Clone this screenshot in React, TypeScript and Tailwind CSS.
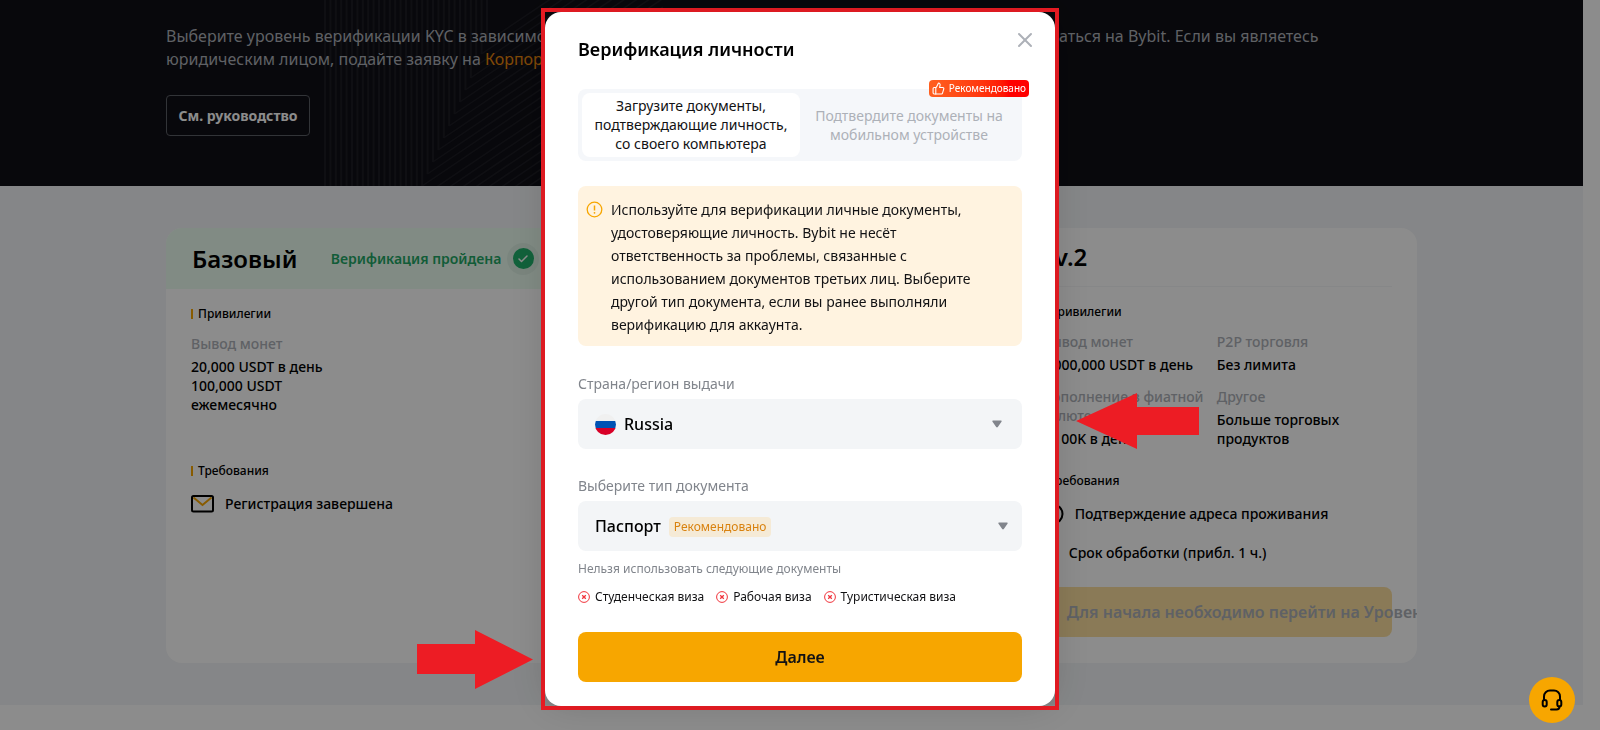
import { type ReactNode } from "react";
import { Check, ThumbsUp, X } from "lucide-react";

const FORBIDDEN_DOCS = ["Студенческая виза", "Рабочая виза", "Туристическая виза"];

function SectionLabel({ children }: { children: ReactNode }) {
  return (
    <h3 className="flex h-[18px] items-center gap-[5px] text-xs font-medium text-black">
      <span className="h-2.5 w-0.5 bg-[#f7a600]" />
      {children}
    </h3>
  );
}

function Privilege({ name, children }: { name: string; children: ReactNode }) {
  return (
    <div className="leading-[19px] font-medium">
      <dt className="text-[#adb1b8]">{name}</dt>
      <dd className="mt-1 text-black">{children}</dd>
    </div>
  );
}

function Requirement({ icon, children }: { icon: ReactNode; children: ReactNode }) {
  return (
    <li className="flex h-6 items-center gap-[11px] font-medium text-black">
      {icon}
      {children}
    </li>
  );
}

function EnvelopeIcon() {
  return (
    <svg width="23" height="18" viewBox="0 0 23 18" fill="none" aria-hidden="true">
      <path d="M2.5 2.5 11.5 10 20.5 2.5" stroke="#f7a600" strokeWidth="2" />
      <rect x="1" y="1" width="21" height="15.5" rx="1.5" stroke="#000" strokeWidth="2" />
    </svg>
  );
}

function CircleIcon({ size }: { size: number }) {
  return (
    <svg width={size} height={size} viewBox="0 0 22 22" fill="none" stroke="#000" strokeWidth="2" aria-hidden="true">
      <circle cx="11" cy="11" r="9.5" />
      <path d="M11 6v5.5l3.5 2" />
    </svg>
  );
}

function Caret() {
  return (
    <svg width="10" height="8" viewBox="0 0 10 8" fill="#81858c" aria-hidden="true">
      <path d="M1.2.5h7.6c.8 0 1.1.7.7 1.3L5.8 7c-.4.6-1.2.6-1.6 0L.5 1.8C.1 1.2.4.5 1.2.5Z" />
    </svg>
  );
}

function FlagIcon() {
  return (
    <svg width="21" height="21" viewBox="0 0 21 21" aria-hidden="true">
      <clipPath id="flag-round">
        <circle cx="10.5" cy="10.5" r="10.5" />
      </clipPath>
      <g clipPath="url(#flag-round)">
        <rect width="21" height="21" fill="#f0f0f0" />
        <rect y="7" width="21" height="7.5" fill="#0052b4" />
        <rect y="14" width="21" height="7" fill="#d80027" />
      </g>
    </svg>
  );
}

function WarningIcon() {
  return (
    <svg width="17" height="17" viewBox="0 0 17 17" fill="none" aria-hidden="true">
      <circle cx="8.5" cy="8.5" r="7.3" stroke="#f7a600" strokeWidth="1.3" />
      <path d="M8.5 4.5v5" stroke="#f7a600" strokeWidth="1.5" />
      <circle cx="8.5" cy="11.8" r=".9" fill="#f7a600" />
    </svg>
  );
}

function ForbiddenIcon() {
  return (
    <svg width="12" height="12" viewBox="0 0 12 12" fill="none" stroke="#f0343c" aria-hidden="true">
      <circle cx="6" cy="6" r="5.4" />
      <path d="m4.2 4.2 3.6 3.6m0-3.6L4.2 7.8" strokeWidth="1.3" />
    </svg>
  );
}

function HeadsetIcon() {
  return (
    <svg width="24" height="24" viewBox="0 0 24 24" fill="none" stroke="#000" strokeWidth="2" strokeLinecap="round" aria-hidden="true">
      <path d="M4 12V8.5A6 6 0 0 1 10 2.5h4a6 6 0 0 1 6 6V12" />
      <rect x="2.7" y="12" width="4" height="6.5" rx="2" />
      <rect x="17.3" y="12" width="4" height="6.5" rx="2" />
      <path d="M19.5 18.5c0 2-1 3-3 3H11" />
    </svg>
  );
}

// Faint stripes behind the hero: vertical ones first, then a diagonal band
function HeroPattern() {
  const verticals = Array.from({ length: 31 }, (_, i) => ({ x: 1 + i * 5.4, end: i < 19 ? 186 : 186 - (i - 18) * 12 }));
  const diagonals = Array.from({ length: 31 }, (_, i) =>
    i < 13 ? { x: 98 + i * 5.4, y: 186 - i * 12 } : { x: 98 + (i - 12) * 13, y: 188 },
  );
  return (
    <svg className="absolute top-0 left-[324px]" width="480" height="186" fill="none" stroke="#1d1d24" aria-hidden="true">
      {verticals.map(({ x, end }) => (
        <path key={x} strokeWidth="2" d={`M${x} 0V${end}`} />
      ))}
      {diagonals.map(({ x, y }) => (
        <path key={`${x}-${y}`} strokeWidth="1.5" d={`M${x} ${y}l230 -155`} />
      ))}
    </svg>
  );
}

function Hero() {
  return (
    <header className="relative overflow-hidden bg-[#0f0f16] pt-[25px] pb-[50px]">
      <HeroPattern />
      <div className="relative mx-auto w-full max-w-[1251px]">
        <p className="text-base leading-[23px] text-[#adb1b8]">
          Выберите уровень верификации KYC в зависимости от того, какими продуктами и услугами вы хотели бы пользоваться на Bybit. Если вы являетесь
          <br />
          юридическим лицом, подайте заявку на{" "}
          <a href="#corporate" className="text-[#e8860c]">
            Корпоративную верификацию
          </a>
        </p>
        <button type="button" className="mt-6 h-[41px] w-36 rounded border border-[#5c5f66] text-sm font-bold text-white">
          См. руководство
        </button>
      </div>
    </header>
  );
}

function Levels() {
  return (
    <section className="bg-[#f3f5f7] py-[42px]">
      <div className="mx-auto grid w-full max-w-[1251px] grid-cols-3 gap-[25px] text-sm">
        <article className="overflow-hidden rounded-2xl bg-white">
          <div className="flex h-[61px] items-center bg-[#ebfdf0] pl-[26px]">
            <h2 className="text-2xl leading-[30px] font-semibold text-black">Базовый</h2>
            <p className="ml-auto pr-1.5 font-semibold text-[#1fa866]">Верификация пройдена</p>
            <span className="mr-[27px] flex size-8 items-center justify-center rounded-full bg-[#dff3e6]">
              <span className="flex size-[21px] items-center justify-center rounded-full bg-[#20b26c]">
                <Check size={12} strokeWidth={3} color="#fff" />
              </span>
            </span>
          </div>
          <div className="px-[25px] pt-4">
            <SectionLabel>Привилегии</SectionLabel>
            <dl className="mt-[11px] grid grid-cols-2">
              <Privilege name="Вывод монет">
                20,000 USDT в день
                <br />
                100,000 USDT ежемесячно
              </Privilege>
            </dl>
            <div className="mt-12">
              <SectionLabel>Требования</SectionLabel>
            </div>
            <ul className="mt-3">
              <Requirement icon={<EnvelopeIcon />}>Регистрация завершена</Requirement>
            </ul>
          </div>
        </article>

        <article className="rounded-2xl bg-white" />

        <article className="overflow-hidden rounded-2xl bg-white px-[25px] pb-[26px]">
          <div className="flex h-[59px] items-center border-b border-[#f5f6f7]">
            <h2 className="text-2xl leading-[30px] font-semibold text-black">Lv.2</h2>
          </div>
          <div className="pt-4">
            <SectionLabel>Привилегии</SectionLabel>
            <dl className="mt-[11px] grid grid-cols-2 gap-y-[13px]">
              <Privilege name="Вывод монет">1,000,000 USDT в день</Privilege>
              <Privilege name="P2P торговля">Без лимита</Privilege>
              <Privilege name="Пополнение в фиатной валюте">$ 100K в день</Privilege>
              <Privilege name="Другое">Больше торговых продуктов</Privilege>
            </dl>
            <div className="mt-6">
              <SectionLabel>Требования</SectionLabel>
            </div>
            <ul className="mt-3 flex flex-col gap-[15px]">
              <Requirement icon={<CircleIcon size={22} />}>Подтверждение адреса проживания</Requirement>
              <Requirement icon={<CircleIcon size={16} />}>Срок обработки (прибл. 1 ч.)</Requirement>
            </ul>
            <button
              type="button"
              disabled
              className="mt-[22px] h-[50px] w-full rounded-lg bg-[#fbdf9f] pl-[25px] text-left text-base font-semibold whitespace-nowrap text-[#adb1b8]"
            >
              Для начала необходимо перейти на Уровень 1
            </button>
          </div>
        </article>
      </div>
    </section>
  );
}

function VerificationDialog() {
  return (
    <div
      role="dialog"
      aria-modal="true"
      aria-labelledby="dialog-title"
      className="relative rounded-2xl bg-white px-[33px] pt-[25px] pb-6 text-sm shadow-[0_0_40px_rgba(0,0,0,0.15)]"
    >
      <button type="button" aria-label="Закрыть" className="absolute top-4 right-[18px] text-[#adb1b8]">
        <X size={24} strokeWidth={2} />
      </button>
      <h1 id="dialog-title" className="text-lg leading-6 font-semibold text-black">
        Верификация личности
      </h1>

      <div role="tablist" className="relative mt-7 flex h-[72px] rounded-lg bg-[#f5f7fa] p-1 leading-[19px]">
        <button type="button" role="tab" aria-selected="true" className="flex-1 rounded-lg bg-white px-2 pb-0.5 text-[#121214]">
          Загрузите документы, подтверждающие личность, со своего компьютера
        </button>
        <button type="button" role="tab" aria-selected="false" className="flex-1 px-2 text-[#adb1b8]">
          Подтвердите документы на мобильном устройстве
        </button>
        <span className="absolute -top-[9px] -right-[7px] flex h-[17px] items-center gap-1 rounded bg-linear-to-r from-[#ff5f1f] to-[#ff0000] to-80% px-[3px] text-[10px] text-white">
          <ThumbsUp size={13} strokeWidth={2} />
          Рекомендовано
        </span>
      </div>

      <div className="mt-[25px] flex gap-2 rounded-lg bg-[#fff3e0] pt-3 pr-10 pb-2.5 pl-2">
        <span className="shrink-0 pt-[3px]">
          <WarningIcon />
        </span>
        <p className="leading-[23px] text-[#121214]">
          Используйте для верификации личные документы, удостоверяющие личность. Bybit не несёт ответственность за
          проблемы, связанные с использованием документов третьих лиц. Выберите другой тип документа, если вы ранее
          выполняли верификацию для аккаунта.
        </p>
      </div>

      <label htmlFor="country" className="mt-7 block leading-5 text-[#81858c]">
        Страна/регион выдачи
      </label>
      <div className="mt-[5px] flex h-[50px] items-center gap-2 rounded-lg bg-[#f3f5f7] pr-5 pl-[17px]">
        <FlagIcon />
        <select id="country" className="min-w-0 flex-1 appearance-none bg-transparent text-base font-medium text-black">
          <option>Russia</option>
        </select>
        <Caret />
      </div>

      <label htmlFor="document" className="mt-[27px] block leading-5 text-[#81858c]">
        Выберите тип документа
      </label>
      <div className="mt-[5px] flex h-[50px] items-center gap-2 rounded-lg bg-[#f3f5f7] pr-3.5 pl-[17px]">
        <select id="document" className="[field-sizing:content] appearance-none bg-transparent text-base font-medium text-black">
          <option>Паспорт</option>
        </select>
        <span className="mt-0.5 rounded bg-[#f5ead6] px-[5px] text-xs leading-5 text-[#d9820f]">Рекомендовано</span>
        <span className="ml-auto">
          <Caret />
        </span>
      </div>

      <p className="mt-[9px] text-xs leading-[18px] text-[#81858c]">Нельзя использовать следующие документы</p>
      <ul className="mt-2.5 flex gap-3 text-xs leading-[18px] text-[#121214]">
        {FORBIDDEN_DOCS.map((doc) => (
          <li key={doc} className="flex items-center gap-[5px]">
            <ForbiddenIcon />
            {doc}
          </li>
        ))}
      </ul>

      <button type="button" className="mt-[26px] h-[50px] w-full rounded-lg bg-[#f7a600] text-base font-semibold text-[#121214]">
        Далее
      </button>
    </div>
  );
}

export default function App() {
  return (
    <div className="min-h-screen bg-white pr-[17px] font-['Noto_Sans',sans-serif]">
      <Hero />
      <Levels />

      <div className="fixed inset-0 flex items-start justify-center bg-black/45 pt-2">
        <div className="relative w-[518px] border-4 border-[#ed1c24]">
          <VerificationDialog />
          {/* callout arrows */}
          <svg className="absolute top-[618px] -left-32" width="116" height="59" fill="#ed1c24" aria-hidden="true">
            <path d="M0 14h58V0l58 29.5L58 59V44H0Z" />
          </svg>
          <svg className="absolute top-[381px] -right-36" width="123" height="56" fill="#ed1c24" aria-hidden="true">
            <path d="M123 14H61V0L0 28l61 28V42h62Z" />
          </svg>
        </div>
      </div>

      <button
        type="button"
        aria-label="Поддержка"
        className="fixed right-[25px] bottom-[7px] flex size-[46px] items-center justify-center rounded-full bg-[#f7a600]"
      >
        <HeadsetIcon />
      </button>
    </div>
  );
}
